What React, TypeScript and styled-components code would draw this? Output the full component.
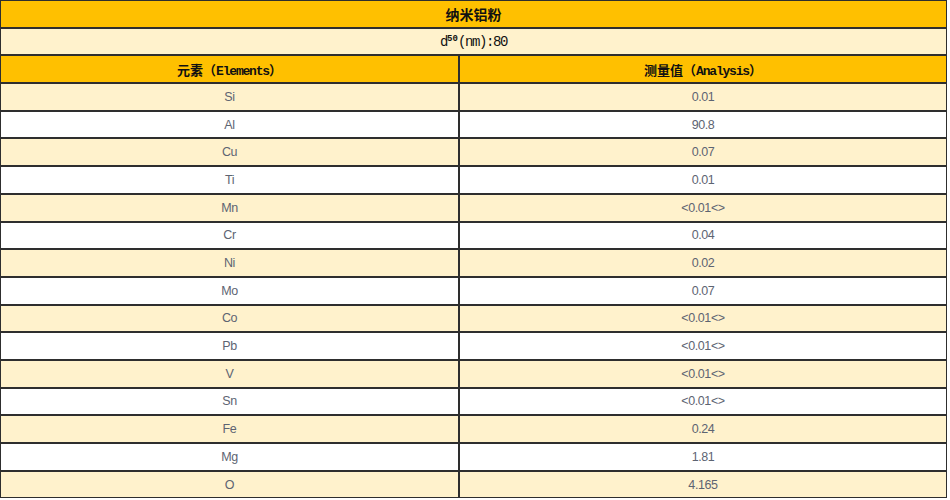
import React from "react";
import styled, { createGlobalStyle } from "styled-components";

const Global = createGlobalStyle`
  html, body { margin: 0; padding: 0; background: #ffffff; }
`;

const Table = styled.table`
  width: 947px;
  border-collapse: separate;
  border-spacing: 0;
  table-layout: fixed;
`;

const Cell = styled.td<{ $bg: string }>`
  background: ${(p) => p.$bg};
  border: 1px solid #2e2e2e;
  height: 25.7px;
  padding: 0;
  text-align: center;
  vertical-align: middle;
`;

const TitleCell = styled(Cell)`
  font-family: "Noto Sans CJK SC", sans-serif;
  font-weight: 700;
  font-size: 14px;
  color: #111;
`;

const SubCell = styled(Cell)`
  font-family: "Liberation Mono", "Noto Sans CJK SC", monospace;
  font-size: 14px;
  letter-spacing: -1.4px;
  color: #111;
  sup { font-size: 9px; font-weight: 700; vertical-align: 5px; letter-spacing: 0; }
`;

const HeadCell = styled(Cell)`
  font-family: "Noto Sans CJK SC", sans-serif;
  font-weight: 700;
  font-size: 13px;
  color: #111;
`;

const Latin = styled.span`
  font-family: "Liberation Mono", monospace;
  letter-spacing: -1.2px;
  font-weight: 700;
`;

const DataCell = styled(Cell)`
  font-family: "Liberation Sans", Arial, sans-serif;
  font-size: 12.5px;
  letter-spacing: -0.4px;
  color: #5d6472;
`;

const rows: [string, string][] = [
  ["Si", "0.01"],
  ["Al", "90.8"],
  ["Cu", "0.07"],
  ["Ti", "0.01"],
  ["Mn", "<0.01<>"],
  ["Cr", "0.04"],
  ["Ni", "0.02"],
  ["Mo", "0.07"],
  ["Co", "<0.01<>"],
  ["Pb", "<0.01<>"],
  ["V", "<0.01<>"],
  ["Sn", "<0.01<>"],
  ["Fe", "0.24"],
  ["Mg", "1.81"],
  ["O", "4.165"],
];

const GOLD = "#ffc000";
const CREAM = "#fff2cc";

export default function App() {
  return (
    <>
      <Global />
      <Table>
        <colgroup>
          <col style={{ width: "459px" }} />
          <col />
        </colgroup>
        <tbody>
          <tr>
            <TitleCell $bg={GOLD} colSpan={2}>纳米铝粉</TitleCell>
          </tr>
          <tr>
            <SubCell $bg={CREAM} colSpan={2}>
              d<sup>50</sup>(nm):80
            </SubCell>
          </tr>
          <tr>
            <HeadCell $bg={GOLD}>
              元素（<Latin>Elements</Latin>）
            </HeadCell>
            <HeadCell $bg={GOLD}>
              测量值（<Latin>Analysis</Latin>）
            </HeadCell>
          </tr>
          {rows.map(([el, v], i) => (
            <tr key={el}>
              <DataCell $bg={i % 2 === 0 ? CREAM : "#ffffff"}>{el}</DataCell>
              <DataCell $bg={i % 2 === 0 ? CREAM : "#ffffff"}>{v}</DataCell>
            </tr>
          ))}
        </tbody>
      </Table>
    </>
  );
}
